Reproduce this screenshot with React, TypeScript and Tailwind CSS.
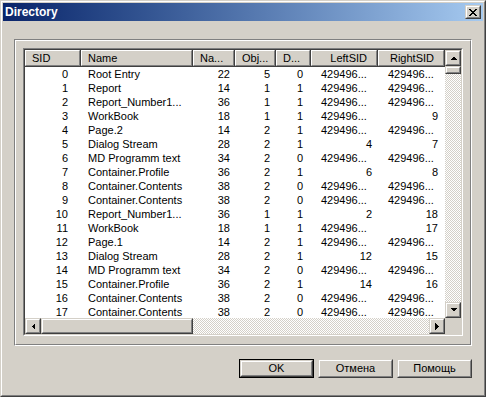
import React from "react";

type Row = [string, string, string, string, string, string, string];

const rows: Row[] = [
  ["0", "Root Entry", "22", "5", "0", "429496...", "429496..."],
  ["1", "Report", "14", "1", "1", "429496...", "429496..."],
  ["2", "Report_Number1...", "36", "1", "1", "429496...", "429496..."],
  ["3", "WorkBook", "18", "1", "1", "429496...", "9"],
  ["4", "Page.2", "14", "2", "1", "429496...", "429496..."],
  ["5", "Dialog Stream", "28", "2", "1", "4", "7"],
  ["6", "MD Programm text", "34", "2", "0", "429496...", "429496..."],
  ["7", "Container.Profile", "36", "2", "1", "6", "8"],
  ["8", "Container.Contents", "38", "2", "0", "429496...", "429496..."],
  ["9", "Container.Contents", "38", "2", "0", "429496...", "429496..."],
  ["10", "Report_Number1...", "36", "1", "1", "2", "18"],
  ["11", "WorkBook", "18", "1", "1", "429496...", "17"],
  ["12", "Page.1", "14", "2", "1", "429496...", "429496..."],
  ["13", "Dialog Stream", "28", "2", "1", "12", "15"],
  ["14", "MD Programm text", "34", "2", "0", "429496...", "429496..."],
  ["15", "Container.Profile", "36", "2", "1", "14", "16"],
  ["16", "Container.Contents", "38", "2", "0", "429496...", "429496..."],
  ["17", "Container.Contents", "38", "2", "0", "429496...", "429496..."],
];

function Raised({ className, children }: { className?: string; children?: React.ReactNode }) {
  return (
    <div className={"border border-t-[#d4d0c8] border-l-[#d4d0c8] border-r-[#404040] border-b-[#404040] " + (className ?? "")}>
      <div className="w-full h-full border border-t-white border-l-white border-r-[#808080] border-b-[#808080] bg-[#d4d0c8] flex items-center justify-center">
        {children}
      </div>
    </div>
  );
}

function Arrow({ dir }: { dir: "up" | "down" | "left" | "right" }) {
  const pts: Record<string, string> = {
    up: "0,4 7,4 3.5,0.5",
    down: "0,0 7,0 3.5,3.5",
    left: "4,0 4,7 0.5,3.5",
    right: "0,0 0,7 3.5,3.5",
  };
  const vert = dir === "up" || dir === "down";
  return (
    <svg width={vert ? 7 : 4} height={vert ? 4 : 7} viewBox={vert ? "0 0 7 4" : "0 0 4 7"} shapeRendering="crispEdges">
      <polygon points={pts[dir]} fill="#000" />
    </svg>
  );
}

const checker = "bg-[repeating-conic-gradient(#d4d0c8_0_25%,#ffffff_0_50%)] bg-[length:2px_2px]";

function HeaderCell({ w, label, align }: { w: string; label: string; align: "l" | "r" }) {
  return (
    <div className={"h-full shrink-0 border-r border-b border-r-[#404040] border-b-[#404040] " + w}>
      <div
        className={
          "h-full border-t border-l border-r border-b border-t-white border-l-white border-r-[#808080] border-b-[#808080] flex items-center " +
          (align === "l" ? "justify-start pl-[6px]" : "justify-end pr-[9px]")
        }
      >
        {label}
      </div>
    </div>
  );
}

export default function App() {
  const isTrunc = (s: string) => s.endsWith("...");
  return (
    <div
      className="w-[486px] h-[397px] border border-t-[#d4d0c8] border-l-[#d4d0c8] border-r-[#404040] border-b-[#404040] text-black"
      style={{ fontFamily: '"Liberation Sans", Arial, sans-serif' }}
    >
      <div className="w-full h-full border border-t-white border-l-white border-r-[#808080] border-b-[#808080] bg-[#d4d0c8] p-px flex flex-col">
        {/* title bar */}
        <div className="h-[18px] shrink-0 bg-gradient-to-r from-[#0a246a] to-[#a6caf0] flex items-center pl-[2px] pr-[2px]">
          <span className="text-white font-bold text-[12px] leading-none flex-1">Directory</span>
          <Raised className="w-[16px] h-[14px]">
            <svg width="8" height="7" viewBox="0 0 8 7" shapeRendering="crispEdges">
              <path d="M0 0h2v1h-2zM6 0h2v1h-2zM1 1h2v1h-2zM5 1h2v1h-2zM2 2h4v1h-4zM3 3h2v1h-2zM2 4h4v1h-4zM1 5h2v1h-2zM5 5h2v1h-2zM0 6h2v1h-2zM6 6h2v1h-2z" fill="#000" />
            </svg>
          </Raised>
        </div>
        {/* body */}
        <div className="flex-1 flex flex-col pt-[18px] px-[11px]">
          {/* group box */}
          <div className="h-[307px] border border-t-[#808080] border-l-[#808080] border-r-white border-b-white">
            <div className="w-full h-full border border-t-white border-l-white border-r-[#808080] border-b-[#808080] p-[7px] pr-[7px]">
              {/* list view */}
              <div className="w-[440px] h-[288px] border border-t-[#808080] border-l-[#808080] border-r-white border-b-white">
                <div className="w-full h-full border border-t-[#404040] border-l-[#404040] border-r-[#d4d0c8] border-b-[#d4d0c8] bg-white flex flex-col text-[11px] leading-none">
                  <div className="flex flex-1 min-h-0">
                    {/* columns area */}
                    <div className="w-[420px] flex flex-col overflow-hidden">
                      <div className="h-[17px] flex shrink-0 bg-[#d4d0c8]">
                        <HeaderCell w="w-[56px]" label="SID" align="l" />
                        <HeaderCell w="w-[112px]" label="Name" align="l" />
                        <HeaderCell w="w-[42px]" label="Na..." align="l" />
                        <HeaderCell w="w-[41px]" label="Obj..." align="l" />
                        <HeaderCell w="w-[35px]" label="D..." align="l" />
                        <HeaderCell w="w-[67px]" label="LeftSID" align="r" />
                        <HeaderCell w="w-[67px]" label="RightSID" align="r" />
                      </div>
                      <div className="flex flex-col">
                        {rows.map((r, i) => (
                          <div key={i} className="h-[14px] flex items-center shrink-0 whitespace-nowrap">
                            <div className="w-[56px] shrink-0 text-right pr-[13px]">{r[0]}</div>
                            <div className="w-[112px] shrink-0 pl-[7px]">{r[1]}</div>
                            <div className="w-[42px] shrink-0 text-right pr-[5px]">{r[2]}</div>
                            <div className="w-[41px] shrink-0 text-right pr-[6px]">{r[3]}</div>
                            <div className="w-[35px] shrink-0 text-right pr-[8px]">{r[4]}</div>
                            <div className={"w-[67px] shrink-0 " + (isTrunc(r[5]) ? "pl-[10px]" : "text-right pr-[6px]")}>{r[5]}</div>
                            <div className={"w-[67px] shrink-0 " + (isTrunc(r[6]) ? "pl-[10px]" : "text-right pr-[7px]")}>{r[6]}</div>
                          </div>
                        ))}
                      </div>
                    </div>
                    {/* vertical scrollbar */}
                    <div className={"w-[16px] flex flex-col shrink-0 " + checker}>
                      <Raised className="w-[16px] h-[16px] shrink-0">
                        <Arrow dir="up" />
                      </Raised>
                      <Raised className="w-[16px] h-[8px] shrink-0" />
                      <div className="flex-1" />
                      <Raised className="w-[16px] h-[16px] shrink-0">
                        <Arrow dir="down" />
                      </Raised>
                    </div>
                  </div>
                  {/* horizontal scrollbar */}
                  <div className="h-[16px] flex shrink-0">
                    <div className={"flex flex-1 " + checker}>
                      <Raised className="w-[16px] h-[16px] shrink-0">
                        <Arrow dir="left" />
                      </Raised>
                      <Raised className="w-[152px] h-[16px] shrink-0" />
                      <div className="flex-1" />
                      <Raised className="w-[16px] h-[16px] shrink-0">
                        <Arrow dir="right" />
                      </Raised>
                    </div>
                    <div className="w-[16px] bg-[#d4d0c8]" />
                  </div>
                </div>
              </div>
            </div>
          </div>
          {/* buttons */}
          <div className="flex justify-end gap-[4px] mt-[13px] pr-0 text-[11px]">
            <div className="w-[75px] h-[19px] border border-black">
              <Raised className="w-full h-full">OK</Raised>
            </div>
            <Raised className="w-[75px] h-[19px]">Отмена</Raised>
            <Raised className="w-[75px] h-[19px]">Помощь</Raised>
          </div>
        </div>
      </div>
    </div>
  );
}
